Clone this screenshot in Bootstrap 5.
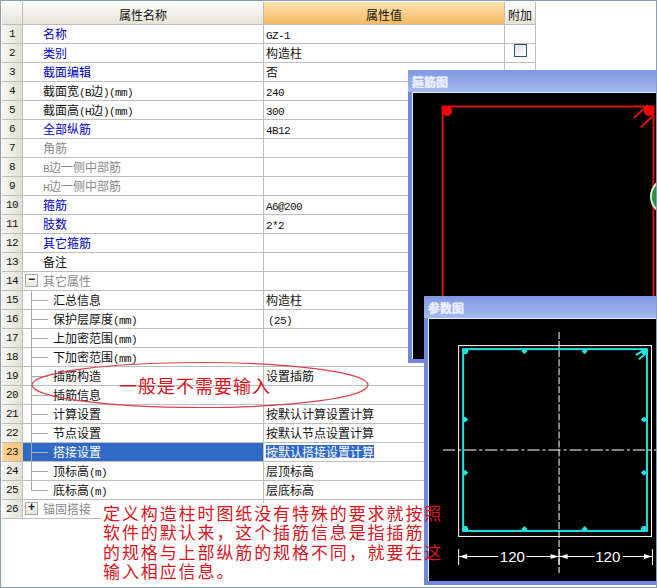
<!DOCTYPE html>
<html lang="zh-CN">
<head>
<meta charset="UTF-8">
<title>属性编辑</title>
<link href="https://cdn.jsdelivr.net/npm/bootstrap@5.3.0/dist/css/bootstrap.min.css" rel="stylesheet">
<style>
body { margin: 0; background: #fff; }
.sheet { position: relative; width: 657px; height: 588px; overflow: hidden; background: #fff; border: 1px solid #8a9db5; padding: 1px 0 0 1px; font: 12px/1 "Noto Sans CJK SC", sans-serif; color: #111; }
.grid { table-layout: fixed; width: 534px; margin: 0; border-collapse: separate; border-spacing: 0; }
.grid td, .grid th { height: 19px; padding: 0 0 0 2px; border: 0; border-right: 1px solid #bdbdbd; border-bottom: 1px solid #bdbdbd; font-size: 12px; font-weight: 400; line-height: 18px; white-space: nowrap; color: #111; background: #fff; box-shadow: none; }
.grid thead th { height: 23px; text-align: center; padding: 0; background: linear-gradient(#fdfdfb, #e6e3d6); }
.grid thead th.hot { background: linear-gradient(#fde2b0, #f4ba62); }
.grid td.num { padding: 0; text-align: center; background: linear-gradient(90deg, #f8f7f2, #e3e0d3); font: 11px/18px "Liberation Mono", monospace; letter-spacing: -.6px; color: #111; }
.grid td.pick { background: linear-gradient(90deg, #fdd594, #fbc573); }
.lat { font: 11px/1 "Liberation Mono", monospace; letter-spacing: -.6px; }
.grid td.nm { padding-left: 20px; }
.grid td.blue { color: #0000c0; }
.grid td.grey { color: #8a8a8a; }
.grid td.kid { position: relative; padding-left: 30px; }
.grid td.kid::before { content: ""; position: absolute; left: 8px; top: 0; bottom: -1px; border-left: 1px solid #a8a8a8; }
.grid td.kid::after { content: ""; position: absolute; left: 8px; top: 9px; width: 17px; border-top: 1px solid #a8a8a8; }
.grid td.kid.last::before { bottom: 9px; }
.grid td.sel { background: #316ac5; color: #fff; }
.mark-sel { display: inline-block; background: #316ac5; color: #fff; line-height: 13px; }
.fold { display: inline-block; width: 13px; height: 13px; margin: 2px 5px 0 0; border: 1px solid #a5a5a5; background: linear-gradient(#fff, #e6e3d6); font: 700 12px/10px "Liberation Mono", monospace; text-align: center; color: #111; vertical-align: top; }
.grid td.tree { padding-left: 2px; }
.tick { display: block; width: 13px; height: 13px; margin: 0 auto; border: 1px solid #2b5273; background: linear-gradient(135deg, #dfe3e6, #fff); }
.pane { position: absolute; display: flex; flex-direction: column; background: #7387da; padding: 0 0 4px 4px; }
.pane-one { left: 407px; top: 69px; width: 250px; height: 293px; }
.pane-two { left: 423px; top: 295px; width: 234px; height: 289px; }
.pane-head { height: 22px; margin-left: -4px; padding-left: 4px; background: linear-gradient(#7f98e2, #a4b9ee); color: #e8eefc; font-size: 12px; font-weight: 700; line-height: 24px; text-shadow: 0 0 1px #fff; }
.pane-body { flex: 1; min-height: 0; background: #000; border-top: 1px solid #e8ecf8; border-left: 1px solid #e8ecf8; }
.pane-body svg { display: block; width: 100%; height: 100%; }
.dim { font: 15px "Liberation Sans", sans-serif; fill: #fff; text-anchor: middle; }
.ring { position: absolute; left: -1px; top: 349px; }
.note { position: absolute; color: #d8141e; font-family: "Noto Sans CJK SC", sans-serif; white-space: nowrap; }
.note-one { left: 118px; top: 374px; font-size: 18px; line-height: 20px; letter-spacing: 1px; }
.note-two { left: 101px; top: 502px; width: 322px; height: 82px; padding: 0 0 0 1px; background: #fff; font-size: 17px; line-height: 19.4px; letter-spacing: 1.9px; }
</style>
</head>
<body>
<div class="sheet">
  <table class="table grid">
    <colgroup><col style="width:21px"><col style="width:241px"><col style="width:241px"><col style="width:31px"></colgroup>
    <thead><tr><th></th><th>属性名称</th><th class="hot">属性值</th><th>附加</th></tr></thead>
    <tbody>
      <tr><td class="num">1</td><td class="nm blue">名称</td><td><span class="lat">GZ-1</span></td><td></td></tr>
      <tr><td class="num">2</td><td class="nm blue">类别</td><td>构造柱</td><td class="p-0"><span class="tick"></span></td></tr>
      <tr><td class="num">3</td><td class="nm blue">截面编辑</td><td>否</td><td></td></tr>
      <tr><td class="num">4</td><td class="nm">截面宽<span class="lat">(B</span>边<span class="lat">)(mm)</span></td><td><span class="lat">240</span></td><td></td></tr>
      <tr><td class="num">5</td><td class="nm">截面高<span class="lat">(H</span>边<span class="lat">)(mm)</span></td><td><span class="lat">300</span></td><td></td></tr>
      <tr><td class="num">6</td><td class="nm blue">全部纵筋</td><td><span class="lat">4B12</span></td><td></td></tr>
      <tr><td class="num">7</td><td class="nm grey">角筋</td><td></td><td></td></tr>
      <tr><td class="num">8</td><td class="nm grey"><span class="lat">B</span>边一侧中部筋</td><td></td><td></td></tr>
      <tr><td class="num">9</td><td class="nm grey"><span class="lat">H</span>边一侧中部筋</td><td></td><td></td></tr>
      <tr><td class="num">10</td><td class="nm blue">箍筋</td><td><span class="lat">A6@200</span></td><td></td></tr>
      <tr><td class="num">11</td><td class="nm blue">肢数</td><td><span class="lat">2*2</span></td><td></td></tr>
      <tr><td class="num">12</td><td class="nm blue">其它箍筋</td><td></td><td></td></tr>
      <tr><td class="num">13</td><td class="nm">备注</td><td></td><td></td></tr>
      <tr><td class="num">14</td><td class="tree grey"><span class="fold">−</span>其它属性</td><td></td><td></td></tr>
      <tr><td class="num">15</td><td class="kid">汇总信息</td><td>构造柱</td><td></td></tr>
      <tr><td class="num">16</td><td class="kid">保护层厚度<span class="lat">(mm)</span></td><td class="ps-1"><span class="lat">(25)</span></td><td></td></tr>
      <tr><td class="num">17</td><td class="kid">上加密范围<span class="lat">(mm)</span></td><td></td><td></td></tr>
      <tr><td class="num">18</td><td class="kid">下加密范围<span class="lat">(mm)</span></td><td></td><td></td></tr>
      <tr><td class="num">19</td><td class="kid">插筋构造</td><td>设置插筋</td><td></td></tr>
      <tr><td class="num">20</td><td class="kid">插筋信息</td><td></td><td></td></tr>
      <tr><td class="num">21</td><td class="kid">计算设置</td><td>按默认计算设置计算</td><td></td></tr>
      <tr><td class="num">22</td><td class="kid">节点设置</td><td>按默认节点设置计算</td><td></td></tr>
      <tr><td class="num pick">23</td><td class="kid sel">搭接设置</td><td><span class="mark-sel">按默认搭接设置计算</span></td><td></td></tr>
      <tr><td class="num">24</td><td class="kid">顶标高<span class="lat">(m)</span></td><td>层顶标高</td><td></td></tr>
      <tr><td class="num">25</td><td class="kid last">底标高<span class="lat">(m)</span></td><td>层底标高</td><td></td></tr>
      <tr><td class="num">26</td><td class="tree grey"><span class="fold">+</span>锚固搭接</td><td></td><td></td></tr>
    </tbody>
  </table>

  <div class="pane pane-one">
    <div class="pane-head">箍筋图</div>
    <div class="pane-body">
      <svg viewBox="413 93 244 266" preserveAspectRatio="xMinYMin slice">
        <path d="M442.5 360V106.5H652.5V360" fill="none" stroke="#e01010" stroke-width="2"/>
        <circle cx="447" cy="111" r="5" fill="#f00"/>
        <circle cx="648" cy="111" r="5" fill="#f00"/>
        <path d="M633 118 647 105M640 127 653 115" stroke="#e01010" stroke-width="2"/>
        <circle cx="668" cy="196" r="18" fill="#2f8f3a" stroke="#d8e8d8" stroke-width="2"/>
      </svg>
    </div>
  </div>

  <div class="pane pane-two">
    <div class="pane-head">参数图</div>
    <div class="pane-body">
      <svg viewBox="429 319 228 262" preserveAspectRatio="xMinYMin slice">
        <rect x="458.5" y="345.5" width="192" height="190" fill="none" stroke="#fff"/>
        <rect x="463" y="349" width="183" height="181" fill="none" stroke="#1fe6e0" stroke-width="2"/>
        <g fill="#1fe6e0">
          <circle cx="465" cy="351" r="3"/><path d="M524 348 527 351 524 354 521 351ZM584 348 587 351 584 354 581 351Z"/><circle cx="643" cy="351" r="3"/>
          <path d="M465 416 468 419 465 422 462 419ZM643 416 646 419 643 422 640 419ZM465 469 468 472 465 475 462 472ZM643 469 646 472 643 475 640 472Z"/>
          <circle cx="465" cy="528" r="3"/><path d="M524 525 527 528 524 531 521 528ZM584 525 587 528 584 531 581 528Z"/><circle cx="643" cy="528" r="3"/>
        </g>
        <path d="M635 355 643 350M638 359 645 353" stroke="#1fe6e0" stroke-width="2"/>
        <path d="M558.5 332V572" stroke="#fff" stroke-dasharray="7 2"/>
        <path d="M443 449.5H657" stroke="#fff" stroke-dasharray="12 3 3 3"/>
        <path d="M458.5 548V564M651.5 548V564M558.5 548V564M458 555.5H498M526 555.5H558M558 555.5H594M622 555.5H651" stroke="#fff"/>
        <path d="M459 555.5 467 553V558ZM558 555.5 550 553V558ZM559 555.5 567 553V558ZM651 555.5 643 553V558Z" fill="#fff"/>
        <text class="dim" x="512" y="561">120</text>
        <text class="dim" x="607" y="561">120</text>
      </svg>
    </div>
  </div>

  <svg class="ring" width="400" height="70" viewBox="0 350 400 70">
    <ellipse cx="200" cy="385" rx="168" ry="22.5" fill="none" stroke="#d8404a" stroke-width="1.2"/>
  </svg>
  <div class="note note-one">一般是不需要输入</div>
  <div class="note note-two">定义构造柱时图纸没有特殊的要求就按照<br>软件的默认来，这个插筋信息是指插筋<br>的规格与上部纵筋的规格不同，就要在这<br>输入相应信息。</div>
</div>
<script src="https://cdn.jsdelivr.net/npm/bootstrap@5.3.0/dist/js/bootstrap.bundle.min.js"></script>
</body>
</html>
